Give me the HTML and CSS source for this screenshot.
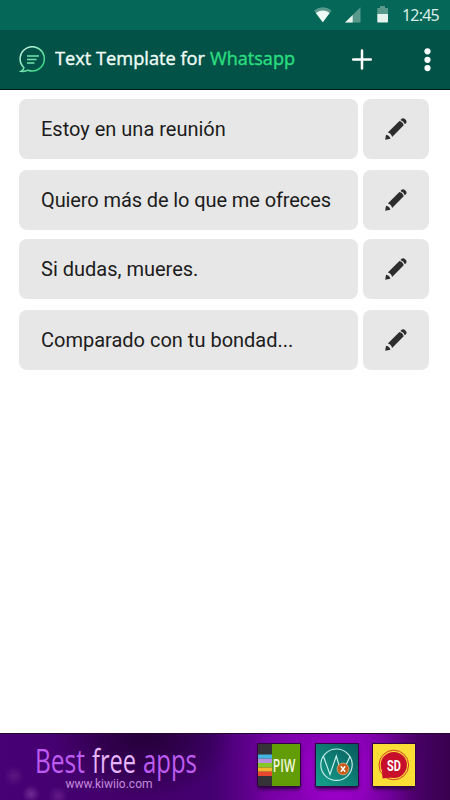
FILE: index.html
```html
<!DOCTYPE html>
<html lang="es">
<head>
<meta charset="utf-8">
<title>Text Template for Whatsapp</title>
<link rel="stylesheet" href="styles.css">
</head>
<body>
<svg class="defs" width="0" height="0" aria-hidden="true">
  <symbol id="pencil" viewBox="0 0 23 23">
    <path d="M1.200 21.800 2 16.800Q5.600 17.200 6.400 20.800z"/>
    <path d="M3.800 14.500 15.400 2.900Q18.900 3.700 19.700 7.300L8.100 18.900Q7.200 15.400 3.800 14.500z"/>
    <path d="M16.400 1.900 17.600.700Q19.400-.4 21.200 1.300Q23.300 3.200 22.200 4.900L20.800 6.300Q19.900 3.100 16.400 1.900z"/>
  </symbol>
</svg>
<div class="screen">
  <div class="status">
    <svg class="wifi" width="18" height="16" viewBox="0 0 18 16"><path d="M0 3.5Q9-2.8 17.5 3.5L8.8 15.2z" fill="#58998c"/><path d="M1.8 5.9Q8.8 1.1 15.7 5.9L8.8 15.2z" fill="#eefaf5"/></svg>
    <svg class="signal" width="16" height="16" viewBox="0 0 16 16"><path d="M0 15.5 15.5.3V15.5z" fill="#58998c"/><path d="M0 15.5 7.7 8V15.5z" fill="#e5f5ee"/></svg>
    <svg class="battery" width="12" height="17" viewBox="0 0 12 17"><path d="M3 0h5v2h3v6H.3V2H3z" fill="#58998c"/><path d="M.3 8H11v7.5q0 1-1 1H1.3q-1 0-1-1z" fill="#e5f5ee"/></svg>
    <span class="clock">12:45</span>
  </div>
  <header class="bar">
    <svg class="logo" width="28" height="28" viewBox="0 0 28 28" fill="none" stroke-width="1.5">
      <defs><linearGradient id="lg" x1="0" y1="0" x2="1" y2="1"><stop offset="0" stop-color="#d8f7e8"/><stop offset=".45" stop-color="#83e7b7"/><stop offset="1" stop-color="#22d476"/></linearGradient></defs>
      <path d="M5 21.700A12.100 12.100 0 1 1 9.100 24.200Q6 25.900 2 25.300Q4.600 24 5 21.700z" stroke="url(#lg)"/>
      <path d="M8 10h12M8 13.500h9.500M8 17h7.500" stroke="#70e3aa"/>
    </svg>
    <svg class="title" width="242" height="28" viewBox="0 0 242 28">
      <text x="0" y="19.3" textLength="150" lengthAdjust="spacingAndGlyphs" fill="#eefbf5">Text Template for</text>
      <text x="155" y="19.3" textLength="85" lengthAdjust="spacingAndGlyphs" fill="#2bdd7e">Whatsapp</text>
    </svg>
    <svg class="add" width="22" height="22" viewBox="0 0 22 22" stroke="#fff" stroke-width="2.5" stroke-linecap="round"><path d="M2.2 10.500h17.600M11 1.500v18"/></svg>
    <svg class="more" width="8" height="24" viewBox="0 0 8 24" fill="#fff"><circle cx="3.500" cy="3.3" r="3.1"/><circle cx="3.500" cy="11.800" r="3.1"/><circle cx="3.500" cy="20.1" r="3.1"/></svg>
  </header>
  <main class="list">
    <div class="row"><div class="text">Estoy en una reunión</div><div class="edit"><svg><use href="#pencil"/></svg></div></div>
    <div class="row"><div class="text snug">Quiero más de lo que me ofreces</div><div class="edit"><svg><use href="#pencil"/></svg></div></div>
    <div class="row tight"><div class="text">Si dudas, mueres.</div><div class="edit"><svg><use href="#pencil"/></svg></div></div>
    <div class="row"><div class="text">Comparado con tu bondad...</div><div class="edit"><svg><use href="#pencil"/></svg></div></div>
  </main>
  <footer class="ad">
    <svg class="slogan" width="172" height="66" viewBox="0 0 172 66">
      <g class="big">
        <text x="0" y="38.500" textLength="50" lengthAdjust="spacingAndGlyphs" fill="#bd5cf0">Best</text>
        <text x="57" y="38.500" textLength="44" lengthAdjust="spacingAndGlyphs" fill="#e6b5fb">free</text>
        <text x="108" y="38.500" textLength="54" lengthAdjust="spacingAndGlyphs" fill="#bd5cf0">apps</text>
      </g>
      <text class="url" x="30.500" y="54" textLength="87" lengthAdjust="spacingAndGlyphs">www.kiwiio.com</text>
    </svg>
    <div class="apps">
      <svg class="app" width="42" height="42" viewBox="0 0 42 42">
        <path d="M0 0h42v42H0z" fill="#629c06"/><path d="M0 0h14v42H0z" fill="#353238"/>
        <path d="M0 10.500h14v4.200H0z" fill="#42b4df"/><path d="M0 14.700h14v4.300H0z" fill="#b690dc"/><path d="M0 19h14v4.500H0z" fill="#85c928"/><path d="M0 23.500h14v4.200H0z" fill="#f4b62e"/><path d="M0 27.700h14V32H0z" fill="#e9462f"/>
        <text class="piw" x="14.800" y="27.800" textLength="22.500" lengthAdjust="spacingAndGlyphs">PIW</text>
      </svg>
      <svg class="app" width="42" height="42" viewBox="0 0 42 42">
        <defs><linearGradient id="tg" x1="1" y1="0" x2="0" y2="1"><stop offset="0" stop-color="#075a5c"/><stop offset="1" stop-color="#14a18c"/></linearGradient></defs>
        <path d="M0 0h42v42H0z" fill="url(#tg)"/>
        <g fill="none" stroke="#c4edea" stroke-width="1.200"><circle cx="20.500" cy="20.700" r="15.700"/><path d="M7.500 12.500 14 30.500 20.300 12 25 28M30 21 34 12.500"/></g>
        <circle cx="27" cy="25" r="5.900" fill="#c75a18" stroke="#f0b584" stroke-width=".7"/><path d="m24.800 22.300 4.400 5.400m0-5.400-4.400 5.400" stroke="#fff" stroke-width="1.500"/>
      </svg>
      <svg class="app" width="42" height="42" viewBox="0 0 42 42">
        <path d="M0 0h42v42H0z" fill="#fadd35"/>
        <circle cx="20.800" cy="21" r="14.800" fill="none" stroke="#d63a26" stroke-width="1"/>
        <path d="M9 26.500 9.500 34.500 18 33.500z" fill="#c70f2c"/>
        <circle cx="20.800" cy="21" r="13.100" fill="#c70f2c"/>
        <text class="sd" x="14" y="26.800" textLength="13.800" lengthAdjust="spacingAndGlyphs">SD</text>
      </svg>
    </div>
  </footer>
</div>
</body>
</html>
```
FILE: styles.css
```css
* { box-sizing: border-box; }
body { margin: 0; background: #fff; font-family: Roboto, "Liberation Sans", sans-serif; }
svg { display: block; flex: none; }
.screen { width: 450px; height: 800px; display: flex; flex-direction: column; overflow: hidden; }
.defs { display: none; }
.status { height: 30px; background: #056758; display: flex; align-items: flex-start; padding-left: 314px; }
.wifi { margin-top: 7px; }
.signal { margin: 7px 0 0 13px; }
.battery { margin: 6px 0 0 16px; }
.clock { margin: 5px 0 0 13px; font: 16px/20px "Noto Sans", sans-serif; letter-spacing: -.8px; color: #d9eee7; }
.bar { height: 60px; background: #025248; border-bottom: 1px solid #001b18; display: flex; align-items: center; padding-left: 19px; }
.title { margin-left: 8px; font: 500 18px "Open Sans", sans-serif; stroke-width: .4; stroke-linejoin: round; }
.title text:first-child { stroke: #eefbf5; }
.title text:last-child { stroke: #2bdd7e; }
.add { margin-left: 54px; }
.more { margin-left: 51px; }
.list { flex: 1; padding: 9px 21px 0 19px; }
.row { display: flex; gap: 5px; height: 60px; margin-bottom: 11px; }
.row.tight { margin-top: -2px; }
.text, .edit { background: #e7e7e7; border-radius: 8px; display: flex; align-items: center; }
.text { width: 339px; padding-left: 22px; font-size: 20px; line-height: 24px; color: #1c1c1c; white-space: nowrap; }
.text.snug { letter-spacing: -.1px; }
.edit { flex: 1; justify-content: center; }
.edit svg { width: 23px; height: 23px; fill: #2c2d2c; margin-right: 1px; }
.ad { height: 67px; display: flex; padding-left: 35px; border-top: 1px solid #24062f;
  background:
    radial-gradient(circle at 14px 42px, #84449a55 0, transparent 10px),
    radial-gradient(circle at 31px 60px, #a05bb577 0, transparent 9px),
    radial-gradient(circle at 58px 62px, #8e42a866 0, transparent 10px),
    radial-gradient(ellipse 90px 90px at 335px 40px, #a800d6 0, #9000bc99 50%, #8000b000 100%),
    radial-gradient(ellipse 90px 65px at 145px 0, #240038 0, #24003899 45%, #24003800 100%),
    linear-gradient(90deg, #480075 0, #420069 30%, #430070 47%, #6e009c 60%, #7d00ad 80%, #4c006c 90%, #38004f 100%); }
.slogan { overflow: visible; }
.big { font: 400 32px "Open Sans", sans-serif; }
.url { font: 13px Roboto, sans-serif; fill: #c58adf; }
.apps { display: flex; gap: 15.5px; margin: 10px 0 0 51px; }
.app { box-shadow: 0 0 0 1px #320044, 0 3px 4px #27003c; }
.piw { font: 600 18px "Open Sans", sans-serif; fill: #f1f7df; }
.sd { font: bold 15px Roboto, sans-serif; fill: #fff; }
```
